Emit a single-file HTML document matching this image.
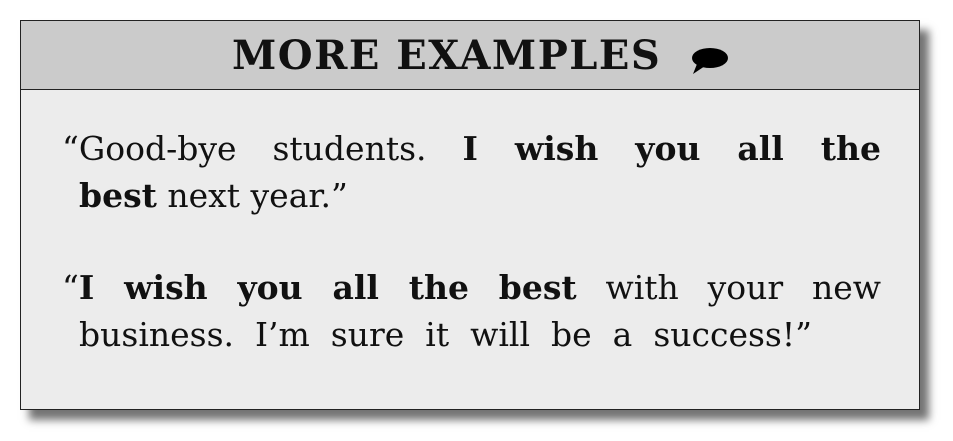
<!DOCTYPE html>
<html><head><style>
body{margin:0;width:953px;height:441px;background:#fff;position:relative;overflow:hidden;font-family:"DejaVu Serif","Liberation Serif",serif;}
.box{position:absolute;left:20px;top:20px;width:898px;height:388px;border:1.5px solid #222;background:#ececec;box-shadow:9px 10px 8px rgba(0,0,0,0.55);}
.hd{position:absolute;left:0;top:0;width:100%;height:68px;background:#cbcbcb;border-bottom:1.5px solid #222;}
.t{position:absolute;left:211px;top:11px;font-size:40px;font-weight:bold;letter-spacing:1.5px;color:#111;white-space:nowrap;}
.l{position:absolute;font-size:33px;color:#111;white-space:nowrap;text-align:justify;text-align-last:justify;}
</style></head><body>
<div class="box"><div class="hd"><div class="t">MORE EXAMPLES</div>
<svg style="position:absolute;left:668px;top:26px" width="42" height="28" viewBox="0 0 42 28"><ellipse cx="21" cy="11" rx="18" ry="10" fill="#000"/><path d="M8 17 L4 27 L16 19 Z" fill="#000"/></svg></div></div>
<div class="l" style="left:62px;top:129px;width:819px">“Good-bye students. <b>I wish you all the</b></div>
<div class="l" style="left:79px;top:176px;text-align-last:left"><b>best</b> next year.”</div>
<div class="l" style="left:62px;top:268px;width:819px">“<b>I wish you all the best</b> with your new</div>
<div class="l" style="left:79px;top:315px;width:733px">business. I’m sure it will be a success!”</div>
</body></html>
